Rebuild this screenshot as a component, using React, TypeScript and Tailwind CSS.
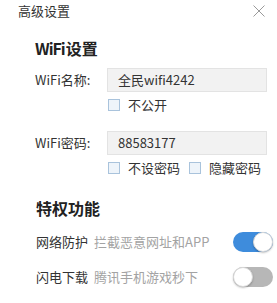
import { useState } from 'react';

const Checkbox = ({ label }: { label: string }) => (
  <label className="flex items-center">
    <span className="w-[12px] h-[12px] border border-[#a9c3dc] bg-[#eef4fa]" />
    <span className="ml-[8px] text-[13px] leading-[14px] text-[#333]">{label}</span>
  </label>
);

const Toggle = ({ on, onClick }: { on: boolean; onClick: () => void }) => (
  <button
    onClick={onClick}
    className={`relative w-[40px] h-[20px] rounded-full ${on ? 'bg-[#3e8cdc]' : 'bg-[#b7b7b7]'}`}
  >
    <span
      className={`absolute top-0 w-[20px] h-[20px] rounded-full bg-white border border-[#d8d8d8] shadow-[0_1px_2px_rgba(0,0,0,0.25)] ${
        on ? 'right-0' : 'left-0'
      }`}
    />
  </button>
);

const Field = ({ label, value }: { label: string; value: string }) => (
  <div className="flex items-center">
    <span className="w-[72px] text-[13px] text-[#333]">{label}</span>
    <div className="w-[160px] h-[24px] flex items-center pl-[10px] bg-[#f2f2f2] border border-[#e3e3e3] text-[13px] text-[#333]">
      {value}
    </div>
  </div>
);

export default function App() {
  const [protect, setProtect] = useState(true);
  const [fast, setFast] = useState(false);

  return (
    <div className="w-[277px] h-[303px] bg-white font-['Noto_Sans_CJK_SC',sans-serif]">
      <div className="h-[22px] flex items-center justify-between pl-[18px] pr-[12px]">
        <span className="text-[13px] text-[#333]">高级设置</span>
        <svg width="12" height="12" viewBox="0 0 12 12">
          <path d="M0.5 0.5 L11.5 11.5 M11.5 0.5 L0.5 11.5" stroke="#9a9a9a" strokeWidth="1" />
        </svg>
      </div>

      <div className="pl-[35px]">
        <h2 className="mt-[16px] h-[20px] leading-[20px] text-[16px] font-bold text-[#222]">
          <span className="tracking-[-1px]">WiFi</span>
          <span className="ml-[1px]">设置</span>
        </h2>

        <div className="mt-[10px]">
          <Field label="WiFi名称:" value="全民wifi4242" />
        </div>
        <div className="mt-[6px] pl-[73px]">
          <Checkbox label="不公开" />
        </div>

        <div className="mt-[19px]">
          <Field label="WiFi密码:" value="88583177" />
        </div>
        <div className="mt-[6px] pl-[73px] flex gap-x-[9px]">
          <Checkbox label="不设密码" />
          <Checkbox label="隐藏密码" />
        </div>

        <h2 className="mt-[23px] pl-[1px] h-[20px] leading-[20px] text-[16px] font-bold text-[#222]">特权功能</h2>

        <div className="mt-[14px] pl-[1px] h-[20px] flex items-center justify-between pr-[4px]">
          <p className="text-[13px] text-[#333]">
            网络防护<span className="ml-[6px] text-[#a3a3a3]">拦截恶意网址和APP</span>
          </p>
          <Toggle on={protect} onClick={() => setProtect(!protect)} />
        </div>
        <div className="mt-[15px] pl-[1px] h-[20px] flex items-center justify-between pr-[4px]">
          <p className="text-[13px] text-[#333]">
            闪电下载<span className="ml-[6px] text-[#a3a3a3]">腾讯手机游戏秒下</span>
          </p>
          <Toggle on={fast} onClick={() => setFast(!fast)} />
        </div>
      </div>
    </div>
  );
}
